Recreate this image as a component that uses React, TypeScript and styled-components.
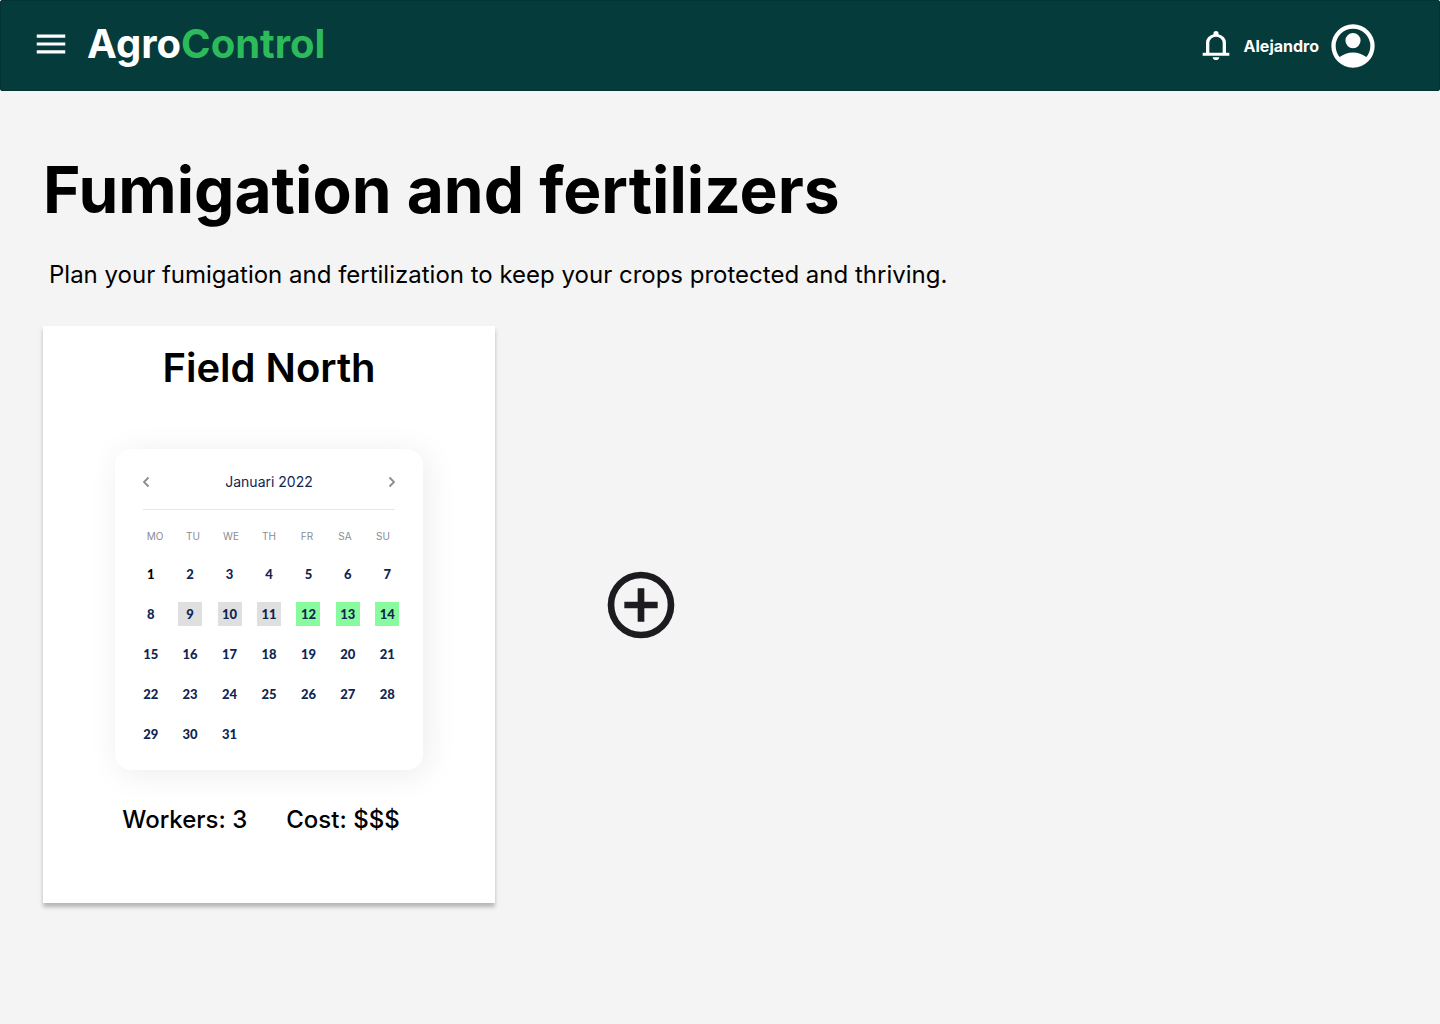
import React from "react";
import styled, { createGlobalStyle } from "styled-components";

const GlobalStyle = createGlobalStyle`
  *, *::before, *::after {
    box-sizing: border-box;
  }
  body {
    margin: 0;
    background: #f4f4f4;
    color: #000;
    font-family: Inter, "Liberation Sans", sans-serif;
  }
  button {
    padding: 0;
    border: 0;
    background: none;
    font: inherit;
    cursor: pointer;
  }
  svg {
    display: block;
    fill: currentColor;
  }
`;

const TopBar = styled.header`
  display: flex;
  align-items: center;
  justify-content: space-between;
  height: 91px;
  padding: 0 60px 0 31px;
  border: 1px solid #033434;
  border-radius: 2px;
  background: #053b3b;
  color: #fff;
`;

const BarGroup = styled.div<{ $gap: number }>`
  display: flex;
  align-items: center;
  gap: ${(p) => p.$gap}px;
`;

const BrandGroup = styled(BarGroup)`
  padding-bottom: 4px;
`;

const IconButton = styled.button`
  color: inherit;
`;

const Brand = styled.a`
  color: #fff;
  font-size: 40px;
  font-weight: 700;
  line-height: 48px;
  text-decoration: none;
`;

const BrandAccent = styled.span`
  color: #2dba5b;
`;

const UserButton = styled.button`
  display: flex;
  align-items: center;
  gap: 8px;
  color: #fff;
  font-size: 16px;
  font-weight: 700;
  line-height: 20px;
`;

const Main = styled.main`
  padding: 61px 43px;
`;

const Title = styled.h1`
  margin: 0 0 31px;
  font-size: 64px;
  font-weight: 700;
  line-height: 76px;
`;

const Lead = styled.p`
  margin: 0 0 36px;
  padding-left: 6px;
  font-size: 24px;
  line-height: 31px;
`;

const Fields = styled.section`
  display: flex;
  flex-wrap: wrap;
  align-items: center;
  gap: 106px;
`;

const Card = styled.article`
  display: flex;
  flex-direction: column;
  align-items: center;
  width: 452px;
  padding: 18px 0 68px;
  background: #fff;
  box-shadow: 0 4px 4px rgba(0, 0, 0, 0.25);
`;

const CardTitle = styled.h2`
  margin: 0 0 57px;
  font-size: 40px;
  font-weight: 600;
  line-height: 48px;
`;

const Calendar = styled.div`
  width: 308px;
  padding: 16px;
  border-radius: 16px;
  background: #fff;
  box-shadow: 4px 4px 32px rgba(0, 0, 0, 0.08);
`;

const MonthBar = styled.div`
  display: flex;
  align-items: center;
  justify-content: space-between;
  height: 45px;
  margin: 0 12px;
  padding-bottom: 11px;
  border-bottom: 1px solid #e6e6e8;
`;

const ArrowButton = styled.button`
  color: #8a8c94;
`;

const Month = styled.span`
  color: #0f2552;
  font-size: 14px;
  line-height: 20px;
`;

const DayTable = styled.table`
  display: block;
  padding-top: 8px;

  thead, tbody {
    display: block;
  }
`;

const WeekRow = styled.tr<{ $head?: boolean }>`
  display: grid;
  grid-template-columns: repeat(7, 1fr);
  align-items: center;
  height: ${(p) => (p.$head ? 36 : 40)}px;
  padding: 0 ${(p) => (p.$head ? 5 : 0)}px;
`;

const WeekDay = styled.th`
  padding: 0;
  color: #8a8c94;
  font-size: 10px;
  font-weight: 400;
  line-height: 16px;
  text-align: center;
`;

const DayCell = styled.td`
  display: flex;
  justify-content: center;
  padding: 0;
`;

type Mark = "none" | "done" | "planned";

const markColor: Record<Mark, string> = {
  none: "transparent",
  done: "#dfdfdf",
  planned: "#89fb9f",
};

const Day = styled.button<{ $mark: Mark; $first: boolean }>`
  width: 24px;
  height: 24px;
  background: ${(p) => markColor[p.$mark]};
  color: ${(p) => (p.$first ? "#000" : "#0f2552")};
  font-family: Lato, "Noto Sans", sans-serif;
  font-size: 13px;
  font-weight: 900;
  line-height: 24px;
  text-align: center;
`;

const Facts = styled.div`
  display: flex;
  gap: 39px;
  margin-top: 34px;
  padding-right: 16px;
  font-size: 24px;
  font-weight: 500;
  line-height: 31px;
`;

const AddButton = styled.button`
  margin-bottom: 20px;
  color: #1d1b20;
`;

const weekDays = ["MO", "TU", "WE", "TH", "FR", "SA", "SU"];
const weeks = [0, 1, 2, 3, 4].map((w) =>
  weekDays.map((_, d) => w * 7 + d + 1).filter((n) => n <= 31)
);

const markOf = (day: number): Mark =>
  day >= 9 && day <= 11 ? "done" : day >= 12 && day <= 14 ? "planned" : "none";

function Symbol({ d, width, height = width }: { d: string; width: number; height?: number }) {
  return (
    <svg width={width} height={height} viewBox="0 -960 960 960" preserveAspectRatio="none" aria-hidden="true">
      <path d={d} />
    </svg>
  );
}

const menuPath = "M120-240v-80h720v80H120Zm0-200v-80h720v80H120Zm0-200v-80h720v80H120Z";
const bellPath =
  "M160-200v-80h80v-280q0-83 50-147.5T420-792v-28q0-25 17.5-42.5T480-880q25 0 42.5 17.5T540-820v28q80 20 130 84.5T720-560v280h80v80H160ZM480-80q-33 0-56.5-23.5T400-160h160q0 33-23.5 56.5T480-80ZM320-280h320v-280q0-66-47-113t-113-47q-66 0-113 47t-47 113v280Z";
const accountPath =
  "M234-276q51-39 114-61.5T480-360q69 0 132 22.5T726-276q35-41 54.5-93T800-480q0-133-93.5-226.5T480-800q-133 0-226.5 93.5T160-480q0 59 19.5 111t54.5 93Zm246-164q-59 0-99.5-40.5T340-580q0-59 40.5-99.5T480-720q59 0 99.5 40.5T620-580q0 59-40.5 99.5T480-440Zm0 360q-83 0-156-31.5T197-197q-54-54-85.5-127T80-480q0-83 31.5-156T197-763q54-54 127-85.5T480-880q83 0 156 31.5T763-763q54 54 85.5 127T880-480q0 83-31.5 156T763-197q-54 54-127 85.5T480-80Z";
const addPath =
  "M440-280h80v-160h160v-80H520v-160h-80v160H280v80h160v160Zm40 200q-83 0-156-31.5T197-197q-54-54-85.5-127T80-480q0-83 31.5-156T197-763q54-54 127-85.5T480-880q83 0 156 31.5T763-763q54 54 85.5 127T880-480q0 83-31.5 156T763-197q-54 54-127 85.5T480-80Zm0-80q134 0 227-93t93-227q0-134-93-227t-227-93q-134 0-227 93t-93 227q0 134 93 227t227 93Z";

function Chevron({ points }: { points: string }) {
  return (
    <svg width="8" height="12" viewBox="0 0 8 12" aria-hidden="true">
      <polyline points={points} fill="none" stroke="currentColor" strokeWidth="1.8" />
    </svg>
  );
}

export default function App() {
  return (
    <>
      <GlobalStyle />
      <TopBar>
        <BrandGroup $gap={17}>
          <IconButton aria-label="Menu">
            <Symbol d={menuPath} width={38} />
          </IconButton>
          <Brand href="#">
            Agro<BrandAccent>Control</BrandAccent>
          </Brand>
        </BrandGroup>
        <BarGroup $gap={8}>
          <IconButton aria-label="Notifications">
            <Symbol d={bellPath} width={40} height={35} />
          </IconButton>
          <UserButton>
            Alejandro
            <Symbol d={accountPath} width={52} />
          </UserButton>
        </BarGroup>
      </TopBar>
      <Main>
        <Title>Fumigation and fertilizers</Title>
        <Lead>Plan your fumigation and fertilization to keep your crops protected and thriving.</Lead>
        <Fields>
          <Card>
            <CardTitle>Field North</CardTitle>
            <Calendar>
              <MonthBar>
                <ArrowButton aria-label="Previous month">
                  <Chevron points="5.5,1.5 1,6 5.5,10.5" />
                </ArrowButton>
                <Month>Januari 2022</Month>
                <ArrowButton aria-label="Next month">
                  <Chevron points="2.5,1.5 7,6 2.5,10.5" />
                </ArrowButton>
              </MonthBar>
              <DayTable>
                <thead>
                  <WeekRow $head>
                    {weekDays.map((name) => (
                      <WeekDay key={name} scope="col">{name}</WeekDay>
                    ))}
                  </WeekRow>
                </thead>
                <tbody>
                  {weeks.map((week) => (
                    <WeekRow key={week[0]}>
                      {week.map((day) => (
                        <DayCell key={day}>
                          <Day $mark={markOf(day)} $first={day === 1}>{day}</Day>
                        </DayCell>
                      ))}
                    </WeekRow>
                  ))}
                </tbody>
              </DayTable>
            </Calendar>
            <Facts>
              <span>Workers: 3</span>
              <span>Cost: $$$</span>
            </Facts>
          </Card>
          <AddButton aria-label="Add field">
            <Symbol d={addPath} width={80} />
          </AddButton>
        </Fields>
      </Main>
    </>
  );
}
